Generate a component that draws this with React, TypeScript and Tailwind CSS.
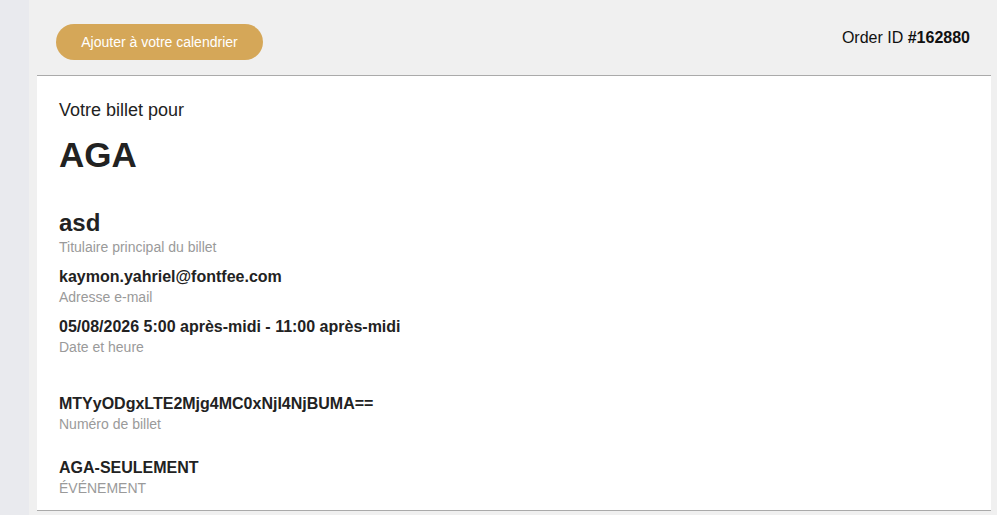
const fields = [
  { value: "kaymon.yahriel@fontfee.com", label: "Adresse e-mail", mt: "mt-[11px]" },
  { value: "05/08/2026 5:00 après-midi - 11:00 après-midi", label: "Date et heure", mt: "mt-[11px]" },
  { value: "MTYyODgxLTE2Mjg4MC0xNjI4NjBUMA==", label: "Numéro de billet", mt: "mt-[38px]" },
  { value: "AGA-SEULEMENT", label: "ÉVÉNEMENT", mt: "mt-[25px]" },
];

export default function App() {
  return (
    <div
      className="flex h-[515px] w-full overflow-hidden text-[#222]"
      style={{ fontFamily: '"Liberation Sans", Arial, sans-serif' }}
    >
      <aside className="w-[29px] shrink-0 bg-[#e9eaee]" />
      <main className="flex flex-1 flex-col bg-[#f0f0f0] pl-[8px] pr-[6px]">
        <header className="flex h-[75px] shrink-0 items-start justify-between pl-[19px] pr-[21px] pt-[24px]">
          <button className="h-[36px] w-[207px] rounded-full bg-[#d5a758] text-[14px] text-white">
            Ajouter à votre calendrier
          </button>
          <div className="mt-[4px] text-[16px] leading-[20px] text-[#111]">
            Order ID <span className="font-bold">#162880</span>
          </div>
        </header>
        <section className="h-[436px] shrink-0 border-y border-[#aaaaaa] bg-white px-[22px] pt-[22px]">
          <p className="text-[18px] leading-[24px]">Votre billet pour</p>
          <h1 className="mt-[11px] text-[35px] font-bold leading-[44px]">AGA</h1>
          <div className="mt-[32px]">
            <div className="text-[24px] font-bold leading-[28px]">asd</div>
            <div className="mt-px text-[14px] leading-[18px] text-[#9a9a9a]">Titulaire principal du billet</div>
          </div>
          {fields.map((f) => (
            <div key={f.label} className={f.mt}>
              <div className="text-[16px] font-bold leading-[20px]">{f.value}</div>
              <div className="mt-px text-[14px] leading-[18px] text-[#9a9a9a]">{f.label}</div>
            </div>
          ))}
        </section>
      </main>
    </div>
  );
}
